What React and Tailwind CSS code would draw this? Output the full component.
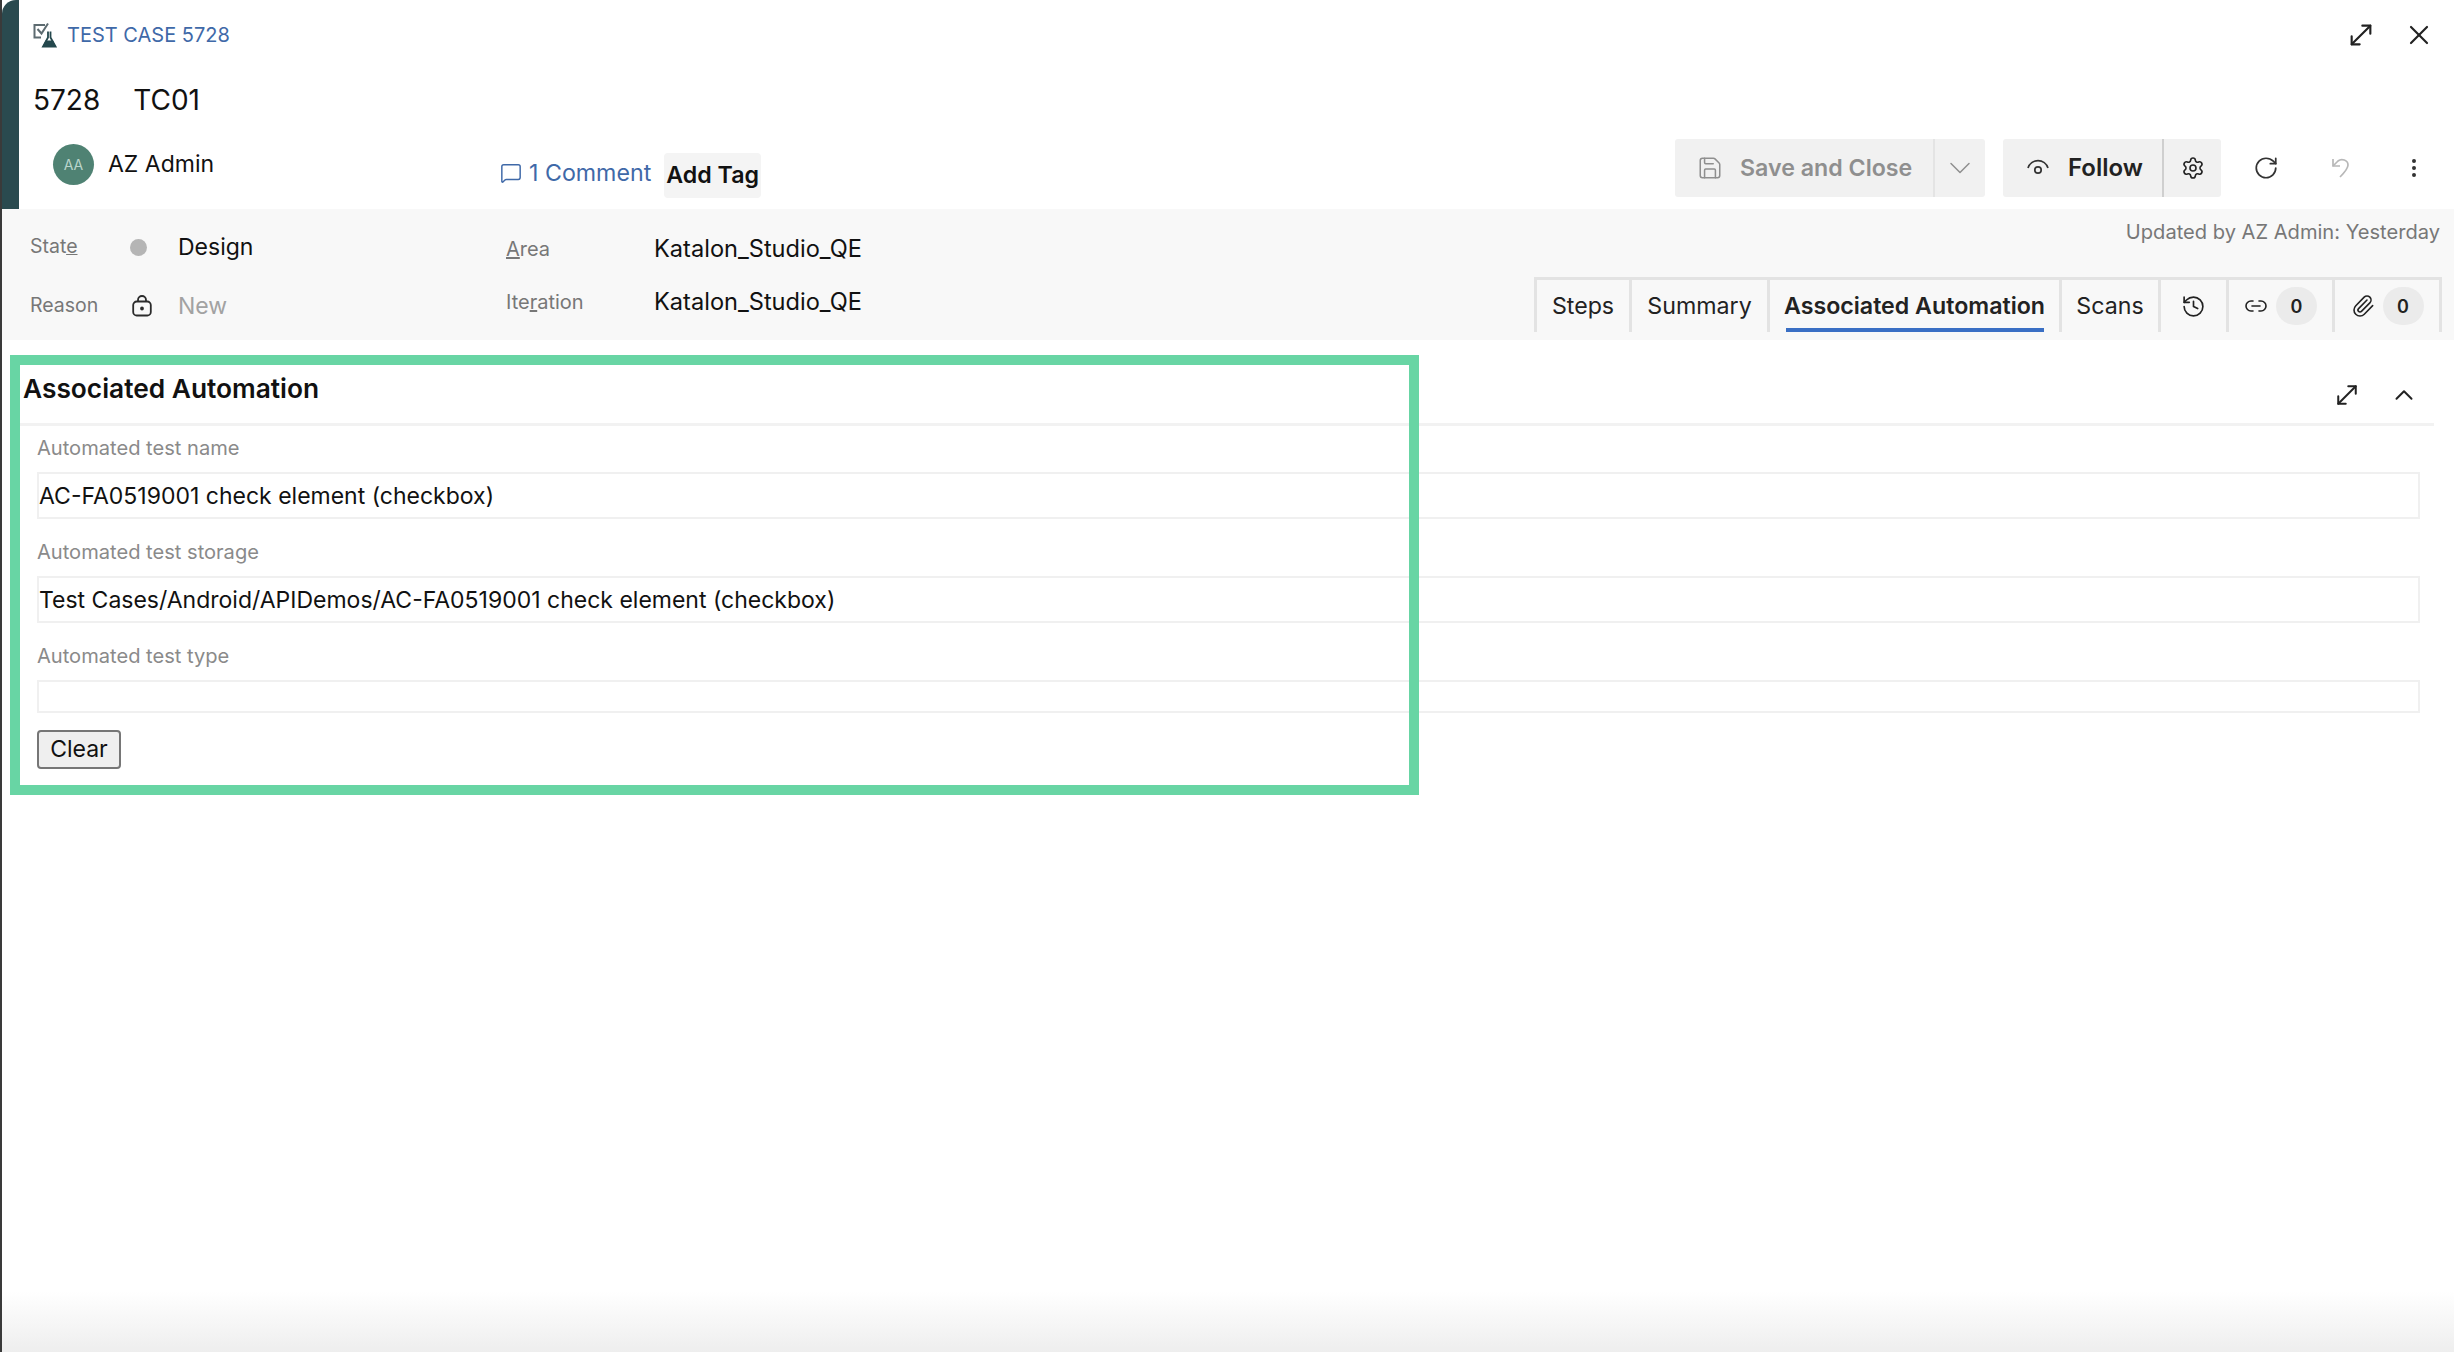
import React from 'react';
import {
  MoveDiagonal, X, Save, ChevronDown, ChevronUp, Settings, RotateCw,
  MoreVertical, History, Link2, Paperclip, MessageSquare,
} from 'lucide-react';

const font = { fontFamily: 'Inter, "Liberation Sans", sans-serif' };

const TestCaseIcon = () => (
  <svg width="24" height="26" viewBox="0 0 24 26" fill="none">
    <path d="M12 3H1.5v12.5H8" stroke="#5d6b70" strokeWidth="2" />
    <path d="M4.5 7l4 4.5 6.5-10" stroke="#5d6b70" strokeWidth="2" />
    <path d="M15 9.5v6l-5 9h12.5l-5-9v-6" stroke="#24484d" strokeWidth="1.8" />
    <path d="M12.5 18.5h7.5l3 6.500h-13.5z" fill="#24484d" />
  </svg>
);

const FollowIcon = () => (
  <svg width="22" height="20" viewBox="0 0 22 20" fill="none" stroke="#333" strokeWidth="1.7">
    <path d="M1 10a10.5 10.5 0 0 1 20 0" />
    <circle cx="11" cy="12" r="3.2" />
  </svg>
);

const LockIcon = () => (
  <svg width="20" height="22" viewBox="0 0 20 22" fill="none" stroke="#2b2b2b" strokeWidth="1.8">
    <rect x="1.2" y="6.5" width="17.6" height="14" rx="3.5" />
    <path d="M6 6.5V5a4 4 0 0 1 8 0v1.5" />
    <circle cx="10" cy="13.5" r="1" fill="#2b2b2b" />
  </svg>
);

const UndoIcon = () => (
  <svg width="22" height="22" viewBox="0 0 22 22" fill="none" stroke="#b8b8b8" strokeWidth="1.7">
    <path d="M3 2v7h7" />
    <path d="M3 9l5-5c3.500-3 10-1 10 4 0 3-3 7-8 12" />
  </svg>
);

const Tab = ({ children, className = '' }) => (
  <div className={`h-full flex items-center justify-center border-l-[3px] border-[#e3e3e3] ${className}`}>
    {children}
  </div>
);

const Count = () => (
  <span className="w-[41px] h-[38px] rounded-full bg-[#ebebeb] flex items-center justify-center text-[18px] font-semibold text-[#222]">0</span>
);

const Field = ({ label, value, height, mb }) => (
  <div className={mb}>
    <div className="h-[20px] flex items-center text-[20.1px] text-[#8a8a8a] mb-[14px]">{label}</div>
    <div className={`${height} border-2 border-[#f0f0f0] flex items-center pt-[2px] text-[23px] text-[#111]`}>{value}</div>
  </div>
);

export default function App() {
  return (
    <div style={font} className="relative w-[2454px] h-[1352px] overflow-hidden bg-white flex text-[#111]">
      <div className="w-[2px] bg-[#3a3a3a] shrink-0" />
      <div className="flex-1 flex flex-col min-w-0">
        {/* Header */}
        <div className="h-[209px] flex shrink-0">
          <div className="w-[17px] bg-[#2a4a4f] rounded-tl-[14px] shrink-0" />
          <div className="flex-1 min-w-0 pl-[14px] pr-[19px] flex flex-col">
            <div className="h-[70px] flex items-center justify-between">
              <div className="flex items-center gap-[10px] text-[20px] text-[#3f69a8]">
                <TestCaseIcon />
                <span>TEST CASE 5728</span>
              </div>
              <div className="flex items-center gap-[26px] text-[#222]">
                <MoveDiagonal size={32} strokeWidth={1.6} />
                <X size={32} strokeWidth={1.6} />
              </div>
            </div>
            <div className="h-[60px] flex items-center text-[28px] gap-[33px]">
              <span>5728</span>
              <span>TC01</span>
            </div>
            <div className="flex-1 flex items-start">
              <div className="w-[467px] pl-[20px] pt-[14px] flex items-center gap-[14px] shrink-0">
                <div className="w-[41px] h-[41px] rounded-full bg-[#4f8273] text-[#b9d5cb] text-[14px] flex items-center justify-center">AA</div>
                <span className="text-[23px]">AZ Admin</span>
              </div>
              <div className="pt-[23px] flex items-center text-[23.2px] text-[#3f69a8]">
                <MessageSquare size={22} strokeWidth={1.6} className="mr-[7px] mb-[5px]" />
                <span className="mb-[5px]">1 Comment</span>
                <span className="ml-[13px] px-[2px] py-[5px] bg-[#f4f4f4] rounded text-[23.2px] font-semibold text-[#111]">Add Tag</span>
              </div>
              <div className="ml-auto pt-[9px] mr-[7px] flex items-center">
                <div className="h-[58px] w-[310px] bg-[#f1f1f1] rounded-[3px] flex items-center text-[#8f8f8f]">
                  <div className="w-[260px] h-full flex items-center pl-[22px] gap-[17px] border-r-2 border-[#e4e4e4]">
                    <Save size={26} strokeWidth={1.4} />
                    <span className="text-[23.2px] font-semibold">Save and Close</span>
                  </div>
                  <div className="flex-1 flex justify-center">
                    <ChevronDown size={36} strokeWidth={1} />
                  </div>
                </div>
                <div className="ml-[18px] h-[58px] w-[218px] bg-[#f1f1f1] rounded-[3px] flex items-center text-[#222]">
                  <div className="w-[161px] h-full flex items-center pl-[24px] gap-[19px] border-r-2 border-[#cfcfcf]">
                    <FollowIcon />
                    <span className="text-[24px] font-semibold">Follow</span>
                  </div>
                  <div className="flex-1 flex justify-center">
                    <Settings size={24} strokeWidth={1.6} />
                  </div>
                </div>
                <div className="ml-[31px] w-[28px] flex justify-center text-[#333]"><RotateCw size={26} strokeWidth={1.6} /></div>
                <div className="ml-[47px] w-[28px] flex justify-center"><UndoIcon /></div>
                <div className="ml-[45px] w-[28px] flex justify-center text-[#333]"><MoreVertical size={24} strokeWidth={2} /></div>
              </div>
            </div>
          </div>
        </div>

        {/* State / area band */}
        <div className="h-[131px] shrink-0 bg-[#f8f8f8] flex pl-[28px] pr-[12px]">
          <div className="w-[476px] shrink-0 flex flex-col text-[19.5px] text-[#777]">
            <div className="h-[76px] flex items-center">
              <span className="w-[100px]">Stat<span className="underline">e</span></span>
              <span className="w-[17px] h-[17px] rounded-full bg-[#b5b5b5] mr-[31px]" />
              <span className="text-[23px] text-[#111]">Design</span>
            </div>
            <div className="h-[42px] flex items-center">
              <span className="w-[102px]">Reason</span>
              <span className="w-[46px]"><LockIcon /></span>
              <span className="text-[23px] text-[#a2a2a2]">New</span>
            </div>
          </div>
          <div className="w-[148px] shrink-0 flex flex-col text-[20px] text-[#777]">
            <div className="h-[80px] flex items-center"><span><span className="underline">A</span>rea</span></div>
            <div className="h-[26px] flex items-center"><span>Ite<span className="underline">r</span>ation</span></div>
          </div>
          <div className="flex flex-col text-[23.6px] text-[#111]">
            <div className="h-[80px] flex items-center">Katalon_Studio_QE</div>
            <div className="h-[26px] flex items-center">Katalon_Studio_QE</div>
          </div>
          <div className="ml-auto flex flex-col items-end">
            <div className="h-[46px] mr-[2px] flex items-center text-[20.1px] text-[#777]">Updated by AZ Admin: Yesterday</div>
            <div className="mt-[22px] h-[55px] flex items-stretch text-[23.2px] text-[#222] border-t-[3px] border-r-[3px] border-[#e3e3e3]">
              <Tab className="w-[95px]">Steps</Tab>
              <Tab className="w-[138px]">Summary</Tab>
              <Tab className="w-[292px] relative">
                <span className="font-semibold">Associated Automation</span>
                <span className="absolute left-[16px] right-[15px] bottom-0 h-[4px] bg-[#3a6fc4]" />
              </Tab>
              <Tab className="w-[99px]">Scans</Tab>
              <Tab className="w-[68px]"><History size={25} strokeWidth={1.6} /></Tab>
              <Tab className="w-[106px] gap-[8px]"><Link2 size={24} strokeWidth={1.6} /><Count /></Tab>
              <Tab className="w-[107px] gap-[8px]"><Paperclip size={24} strokeWidth={1.6} /><Count /></Tab>
            </div>
          </div>
        </div>

        {/* Associated Automation section */}
        <div className="flex-1 min-h-0 flex flex-col bg-gradient-to-b from-white from-[94%] to-[#eeeeee]">
          <div className="mt-[16px] h-[70px] ml-[18px] mr-[20px] border-b-[3px] border-[#f2f2f2] flex items-start justify-between">
            <span className="mt-[20px] ml-[3px] text-[26.3px] font-semibold leading-none">Associated Automation</span>
            <div className="mt-[24px] mr-[15px] flex items-center gap-[27px] text-[#222]">
              <MoveDiagonal size={30} strokeWidth={1.6} />
              <ChevronUp size={30} strokeWidth={1.6} />
            </div>
          </div>
          <div className="pl-[35px] pr-[34px] pt-[12px]">
            <Field label="Automated test name" value="AC-FA0519001 check element (checkbox)" height="h-[47px]" mb="mb-[23px]" />
            <Field label="Automated test storage" value="Test Cases/Android/APIDemos/AC-FA0519001 check element (checkbox)" height="h-[47px]" mb="mb-[23px]" />
            <Field label="Automated test type" value="" height="h-[33px]" mb="mb-[17px]" />
            <button className="w-[84px] h-[39px] bg-[#efefef] border-2 border-[#767676] rounded-[4px] text-[23px] text-[#111]">Clear</button>
          </div>
        </div>
      </div>

      {/* Highlight frame over the screenshot */}
      <div className="absolute left-[10px] top-[355px] w-[1409px] h-[440px] border-[10px] border-[#68d5a4] pointer-events-none" />
    </div>
  );
}
